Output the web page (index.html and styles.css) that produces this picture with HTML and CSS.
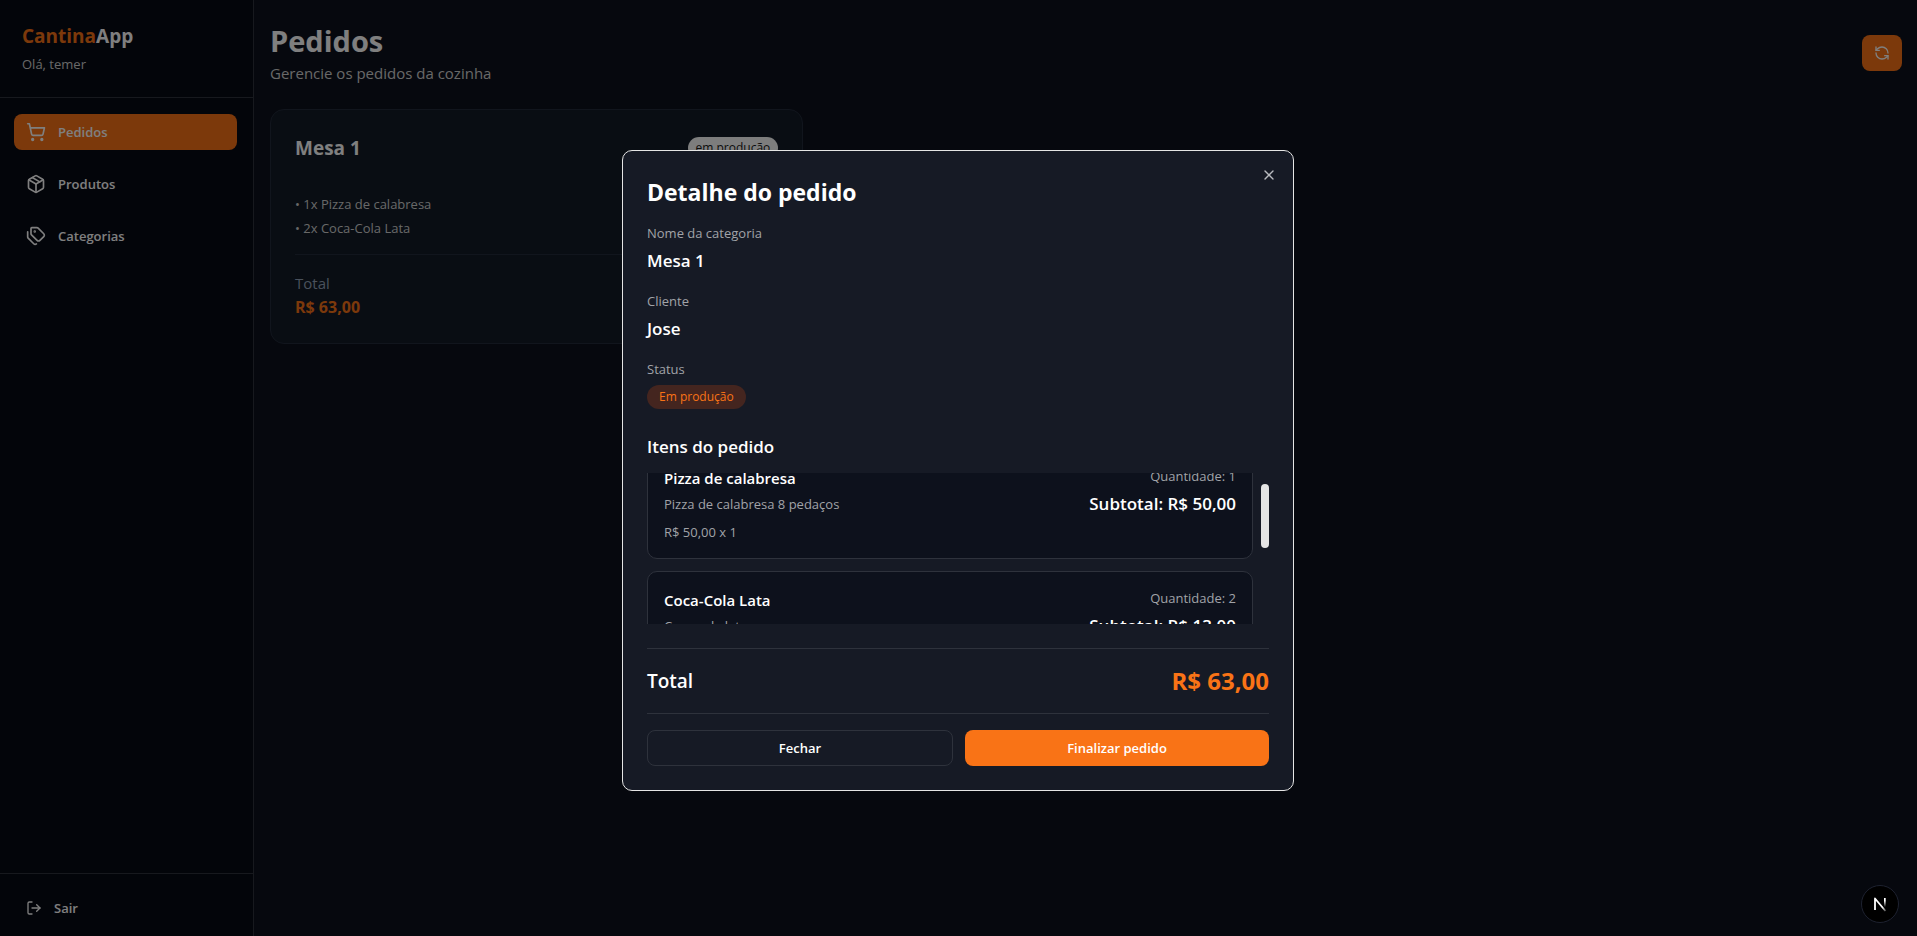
FILE: index.html
```html
<!DOCTYPE html>
<html lang="pt-BR">

<head>
  <meta charset="UTF-8">
  <meta name="viewport" content="width=device-width, initial-scale=1.0">
  <title>CantinaApp - Pedidos</title>
  <link rel="stylesheet" href="styles.css">
</head>

<body>
  <div class="layout">
    <aside class="sidebar">
      <div class="sidebar-header">
        <h2 class="brand"><span>Cantina</span>App</h2>
        <p class="hello">Olá, temer</p>
      </div>

      <nav class="nav">
        <a href="#" class="nav-link active">
          <svg class="icon-nav" viewBox="0 0 24 24"><circle cx="8" cy="21" r="1"/><circle cx="19" cy="21" r="1"/><path d="M2.05 2.05h2l2.66 12.42a2 2 0 0 0 2 1.58h9.78a2 2 0 0 0 1.95-1.57l1.65-7.43H5.12"/></svg>
          Pedidos
        </a>
        <a href="#" class="nav-link">
          <svg class="icon-nav" viewBox="0 0 24 24"><path d="M11 21.73a2 2 0 0 0 2 0l7-4A2 2 0 0 0 21 16V8a2 2 0 0 0-1-1.73l-7-4a2 2 0 0 0-2 0l-7 4A2 2 0 0 0 3 8v8a2 2 0 0 0 1 1.73z"/><path d="M12 22V12"/><path d="M3.29 7 12 12l8.71-5"/><path d="m7.5 4.27 9 5.15"/></svg>
          Produtos
        </a>
        <a href="#" class="nav-link">
          <svg class="icon-nav" viewBox="0 0 24 24"><path d="M13.172 2a2 2 0 0 1 1.414.586l6.71 6.71a2.4 2.4 0 0 1 0 3.408l-4.592 4.592a2.4 2.4 0 0 1-3.408 0l-6.71-6.71A2 2 0 0 1 6 9.172V3a1 1 0 0 1 1-1z"/><path d="M2 7v6.172a2 2 0 0 0 .586 1.414l6.71 6.71a2.4 2.4 0 0 0 3.191.193"/><circle cx="10.5" cy="6.5" r=".5" fill="currentColor"/></svg>
          Categorias
        </a>
      </nav>

      <div class="sidebar-footer">
        <button type="button" class="logout">
          <svg class="icon-small" viewBox="0 0 24 24"><path d="m16 17 5-5-5-5"/><path d="M21 12H9"/><path d="M9 21H5a2 2 0 0 1-2-2V5a2 2 0 0 1 2-2h4"/></svg>
          Sair
        </button>
      </div>
    </aside>

    <main class="content">
      <div class="page-header">
        <div>
          <h1>Pedidos</h1>
          <p>Gerencie os pedidos da cozinha</p>
        </div>
        <button type="button" class="refresh" aria-label="Atualizar">
          <svg class="icon-small" viewBox="0 0 24 24"><path d="M21 12a9 9 0 0 0-9-9 9.75 9.75 0 0 0-6.74 2.74L3 8"/><path d="M3 3v5h5"/><path d="M3 12a9 9 0 0 0 9 9 9.75 9.75 0 0 0 6.74-2.74L21 16"/><path d="M16 16h5v5"/></svg>
        </button>
      </div>

      <div class="orders">
        <div class="order-card">
          <div class="order-top">
            <h3>Mesa 1</h3>
            <span class="badge">em produção</span>
          </div>
          <div class="order-items">
            <p>• 1x Pizza de calabresa</p>
            <p>• 2x Coca-Cola Lata</p>
          </div>
          <div class="order-total">
            <p>Total</p>
            <strong>R$ 63,00</strong>
          </div>
        </div>
      </div>
    </main>
  </div>

  <div class="overlay">
    <div class="modal" role="dialog" aria-modal="true" aria-labelledby="modal-title">
      <button type="button" class="modal-close" aria-label="Fechar">
        <svg class="icon-small" viewBox="0 0 24 24"><path d="M18 6 6 18"/><path d="m6 6 12 12"/></svg>
      </button>

      <h2 id="modal-title" class="modal-title">Detalhe do pedido</h2>

      <div class="details">
        <div>
          <p class="label">Nome da categoria</p>
          <p class="value">Mesa 1</p>
        </div>
        <div>
          <p class="label">Cliente</p>
          <p class="value">Jose</p>
        </div>
        <div>
          <p class="label">Status</p>
          <span class="status">Em produção</span>
        </div>
      </div>

      <h3 class="items-title">Itens do pedido</h3>
      <div class="items-area">
        <div class="items" id="items">
          <div class="item">
            <div class="item-info">
              <h4>Pizza de calabresa</h4>
              <p>Pizza de calabresa 8 pedaços</p>
              <p class="item-price">R$ 50,00 x 1</p>
            </div>
            <div class="item-sum">
              <p>Quantidade: 1</p>
              <strong>Subtotal: R$ 50,00</strong>
            </div>
          </div>
          <div class="item">
            <div class="item-info">
              <h4>Coca-Cola Lata</h4>
              <p>Coca cola lata</p>
              <p class="item-price">R$ 6,50 x 2</p>
            </div>
            <div class="item-sum">
              <p>Quantidade: 2</p>
              <strong>Subtotal: R$ 13,00</strong>
            </div>
          </div>
        </div>
        <div class="items-thumb"></div>
      </div>

      <div class="modal-total">
        <span>Total</span>
        <strong>R$ 63,00</strong>
      </div>

      <div class="modal-actions">
        <button type="button" class="btn btn-outline">Fechar</button>
        <button type="button" class="btn btn-primary">Finalizar pedido</button>
      </div>
    </div>
  </div>

  <button type="button" class="dev-badge" aria-label="Next.js">
    <svg viewBox="0 0 36 36">
      <defs>
        <linearGradient id="fade" x1="0" y1="0" x2="0" y2="1">
          <stop offset="0.3" stop-color="#fff"/>
          <stop offset="1" stop-color="#fff" stop-opacity="0"/>
        </linearGradient>
        <linearGradient id="fade-diagonal" x1="0" y1="0" x2="1" y2="1">
          <stop offset="0.7" stop-color="#fff"/>
          <stop offset="1" stop-color="#fff" stop-opacity="0.3"/>
        </linearGradient>
      </defs>
      <path d="M13 24V12.5L23.5 25" fill="none" stroke="url(#fade-diagonal)" stroke-width="1.8" stroke-linecap="butt"/>
      <rect x="22" y="12" width="1.7" height="9" fill="url(#fade)" stroke="none"/>
    </svg>
  </button>

  <script>
    // the list opens slightly scrolled
    document.getElementById('items').scrollTop = 24;
  </script>
</body>

</html>
```
FILE: styles.css
```css
* {
  box-sizing: border-box;
}

body {
  margin: 0;
  background: #0d111c;
  color: #fff;
  font-family: "Open Sans", "Noto Sans", sans-serif;
  font-size: 15px;
  line-height: 24px;
}

h1, h2, h3, h4, p {
  margin: 0;
}

button {
  font-family: inherit;
  color: inherit;
  cursor: pointer;
}

svg {
  fill: none;
  stroke: currentColor;
  stroke-width: 2;
  stroke-linecap: round;
  stroke-linejoin: round;
}

.icon-nav {
  width: 20px;
  height: 20px;
}

.icon-small {
  width: 16px;
  height: 16px;
}

.layout {
  display: flex;
  min-height: 100vh;
}

/* Sidebar */
.sidebar {
  width: 254px;
  flex-shrink: 0;
  display: flex;
  flex-direction: column;
  background: #070a14;
  border-right: 1px solid #2e323c;
}

.sidebar-header {
  padding: 22px 22px 23px;
  border-bottom: 1px solid #2e323c;
}

.brand {
  font-size: 19px;
  line-height: 28px;
  font-weight: 700;
}

.brand span {
  color: #f97316;
}

.hello {
  margin-top: 4px;
  font-size: 13px;
  line-height: 20px;
  color: #d1d1d1;
}

.nav {
  flex: 1;
  display: flex;
  flex-direction: column;
  gap: 16px;
  padding: 16px 16px 16px 14px;
}

.nav-link {
  display: flex;
  align-items: center;
  gap: 12px;
  height: 36px;
  padding: 0 12px;
  border-radius: 8px;
  color: #fff;
  font-size: 13px;
  font-weight: 600;
  text-decoration: none;
}

.nav-link.active {
  background: #f97316;
}

.sidebar-footer {
  padding: 16px 14px 10px;
  border-top: 1px solid #2e323c;
}

.logout {
  display: flex;
  align-items: center;
  gap: 12px;
  height: 36px;
  padding: 0 12px;
  border: 0;
  background: none;
  font-size: 13px;
  font-weight: 600;
}

/* Page */
.content {
  flex: 1;
  padding: 21px 15px 21px 16px;
}

.page-header {
  display: flex;
  justify-content: space-between;
  align-items: center;
  margin-bottom: 24px;
}

.page-header h1 {
  font-size: 29px;
  line-height: 40px;
  font-weight: 700;
}

.page-header p {
  color: #d1d1d1;
}

.refresh {
  display: flex;
  align-items: center;
  justify-content: center;
  width: 40px;
  height: 36px;
  border: 0;
  border-radius: 8px;
  background: #f97316;
}

.orders {
  display: grid;
  grid-template-columns: repeat(3, 1fr);
  gap: 16px;
}

.order-card {
  padding: 24px;
  border: 1px solid #222a3a;
  border-radius: 14px;
  background: #121a27;
}

.order-top {
  display: flex;
  justify-content: space-between;
  align-items: center;
  margin-bottom: 30px;
}

.order-top h3 {
  font-size: 19px;
  line-height: 28px;
  font-weight: 700;
}

.badge {
  padding: 2px 8px;
  border-radius: 12px;
  background: #fafafa;
  color: #171717;
  font-size: 12px;
  line-height: 18px;
}

.order-items {
  padding-bottom: 14px;
  border-bottom: 1px solid #222a3a;
  font-size: 13px;
  color: #d1d1d1;
}

.order-total {
  padding-top: 16px;
  color: #94a3b8;
}

.order-total strong {
  display: block;
  color: #f97316;
  font-size: 16px;
}

/* Modal */
.overlay {
  position: fixed;
  inset: 0;
  display: flex;
  align-items: center;
  justify-content: center;
  padding: 4px 1px 0 0;
  background: rgba(0, 0, 0, 0.5);
}

.modal {
  position: relative;
  width: 100%;
  max-width: 672px;
  padding: 24px;
  border: 1px solid #e5e5e5;
  border-radius: 10px;
  background: #161a25;
}

.modal-close {
  position: absolute;
  top: 16px;
  right: 16px;
  display: flex;
  padding: 0;
  border: 0;
  background: none;
  color: #b9bbc0;
}

.modal-title {
  font-size: 23px;
  line-height: 34px;
  font-weight: 700;
}

.details {
  display: flex;
  flex-direction: column;
  gap: 16px;
  margin-top: 14px;
}

.label {
  margin-bottom: 4px;
  font-size: 13px;
  line-height: 20px;
  color: #a1a3a8;
}

.value {
  font-size: 17px;
  line-height: 28px;
  font-weight: 600;
}

.status {
  display: inline-block;
  padding: 0 12px;
  border-radius: 12px;
  background: #44251f;
  color: #f97316;
  font-size: 12px;
  line-height: 24px;
}

.items-title {
  margin: 24px 0 12px;
  font-size: 17px;
  line-height: 28px;
  font-weight: 600;
}

.items-area {
  display: flex;
  gap: 8px;
}

.items {
  flex: 1;
  display: flex;
  flex-direction: column;
  gap: 12px;
  height: 151px;
  overflow-y: auto;
  scrollbar-width: none;
}

.items-thumb {
  width: 8px;
  height: 64px;
  margin-top: 11px;
  border-radius: 4px;
  background: #e5e5e5;
}

.item {
  display: flex;
  justify-content: space-between;
  flex-shrink: 0;
  padding: 16px;
  border: 1px solid #2e323c;
  border-radius: 10px;
  background: #0d111c;
}

.item h4 {
  margin-bottom: 4px;
  font-size: 15px;
  line-height: 24px;
  font-weight: 600;
}

.item p {
  font-size: 13px;
  line-height: 20px;
  color: #a1a3a8;
}

.item .item-price {
  margin-top: 8px;
}

.item-sum {
  text-align: right;
}

.item-sum strong {
  display: block;
  margin-top: 4px;
  font-size: 17px;
  line-height: 28px;
  font-weight: 600;
}

.modal-total {
  display: flex;
  justify-content: space-between;
  align-items: center;
  margin-top: 24px;
  padding: 16px 0;
  border-top: 1px solid #2e323c;
  border-bottom: 1px solid #2e323c;
  font-size: 19px;
  line-height: 32px;
  font-weight: 600;
}

.modal-total strong {
  color: #f97316;
  font-size: 24px;
  font-weight: 700;
}

.modal-actions {
  display: flex;
  gap: 12px;
  margin-top: 16px;
}

.btn {
  flex: 1;
  height: 36px;
  border: 0;
  border-radius: 8px;
  font-size: 13px;
  font-weight: 600;
}

.btn-outline {
  border: 1px solid #2e323c;
  background: none;
}

.btn-primary {
  background: #f97316;
}

.dev-badge {
  position: fixed;
  right: 18px;
  bottom: 13px;
  width: 38px;
  height: 38px;
  padding: 0;
  border: 1px solid #1e2230;
  border-radius: 50%;
  background: #000;
}

.dev-badge svg {
  display: block;
}
```
